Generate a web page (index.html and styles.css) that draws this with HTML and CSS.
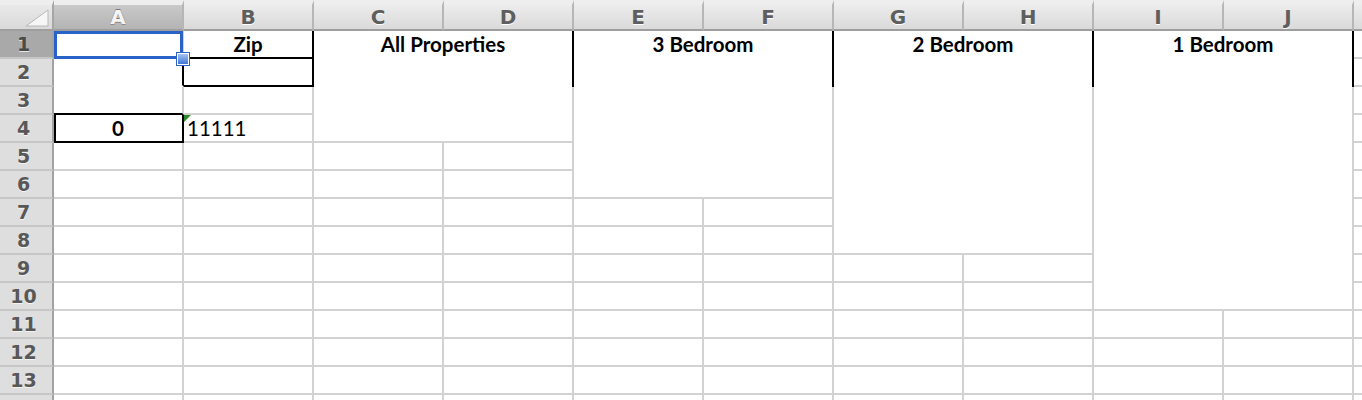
FILE: index.html
```html
<!DOCTYPE html>
<html>
<head>
<meta charset="utf-8">
<link rel="stylesheet" href="styles.css">
</head>
<body>
<div class="sheet">
  <div class="corner"><svg class="corner-tri" width="24" height="18" viewBox="0 0 24 18"><path d="M1 17 L23 1 L23 17 Z" fill="#f6f6f6" stroke="#b8b8b8" stroke-width="1"/></svg></div>
  <div class="ch ch-sel">A</div><div class="ch">B</div><div class="ch">C</div><div class="ch">D</div><div class="ch">E</div><div class="ch">F</div><div class="ch">G</div><div class="ch">H</div><div class="ch">I</div><div class="ch">J</div><div class="ch"></div>

  <div class="rh rh-sel">1</div>
  <div class="c sel"><span class="handle"></span></div>
  <div class="c t bk-r bk-b">Zip</div>
  <div class="c t m-cd">All Properties</div>
  <div class="c t m-ef bk-seg">3 Bedroom</div>
  <div class="c t m-gh bk-seg">2 Bedroom</div>
  <div class="c t m-ij bk-seg bk-seg-r">1 Bedroom</div>
  <div class="c"></div>

  <div class="rh">2</div>
  <div class="c bk-r no-b"></div>
  <div class="c bk-r bk-b"></div>
  <div class="c"></div>

  <div class="rh">3</div>
  <div class="c bk-b"></div>
  <div class="c"></div>
  <div class="c"></div>

  <div class="rh">4</div>
  <div class="c t bk-r bk-b bk-l">0</div>
  <div class="c num-text">11111</div>
  <div class="c"></div>

  <div class="rh">5</div>
  <div class="c"></div><div class="c"></div><div class="c"></div><div class="c"></div>
  <div class="c"></div>

  <div class="rh">6</div>
  <div class="c"></div><div class="c"></div><div class="c"></div><div class="c"></div>
  <div class="c"></div>

  <div class="rh">7</div>
  <div class="c"></div><div class="c"></div><div class="c"></div><div class="c"></div><div class="c"></div><div class="c"></div>
  <div class="c"></div>

  <div class="rh">8</div>
  <div class="c"></div><div class="c"></div><div class="c"></div><div class="c"></div><div class="c"></div><div class="c"></div>
  <div class="c"></div>

  <div class="rh">9</div>
  <div class="c"></div><div class="c"></div><div class="c"></div><div class="c"></div><div class="c"></div><div class="c"></div><div class="c"></div><div class="c"></div>
  <div class="c"></div>

  <div class="rh">10</div>
  <div class="c"></div><div class="c"></div><div class="c"></div><div class="c"></div><div class="c"></div><div class="c"></div><div class="c"></div><div class="c"></div>
  <div class="c"></div>

  <div class="rh">11</div>
  <div class="c"></div><div class="c"></div><div class="c"></div><div class="c"></div><div class="c"></div><div class="c"></div><div class="c"></div><div class="c"></div><div class="c"></div><div class="c"></div>
  <div class="c"></div>

  <div class="rh">12</div>
  <div class="c"></div><div class="c"></div><div class="c"></div><div class="c"></div><div class="c"></div><div class="c"></div><div class="c"></div><div class="c"></div><div class="c"></div><div class="c"></div>
  <div class="c"></div>

  <div class="rh">13</div>
  <div class="c"></div><div class="c"></div><div class="c"></div><div class="c"></div><div class="c"></div><div class="c"></div><div class="c"></div><div class="c"></div><div class="c"></div><div class="c"></div>
  <div class="c"></div>

  <div class="rh">14</div>
  <div class="c"></div><div class="c"></div><div class="c"></div><div class="c"></div><div class="c"></div><div class="c"></div><div class="c"></div><div class="c"></div><div class="c"></div><div class="c"></div>
  <div class="c"></div>
</div>
</body>
</html>
```

FILE: styles.css
```css
html, body {
  margin: 0;
  padding: 0;
  background: #ffffff;
  overflow: hidden;
}

.sheet {
  display: grid;
  grid-template-columns: 54px repeat(11, 130px);
  grid-template-rows: 31px repeat(14, 28px);
  width: 1484px;
}

.corner {
  box-sizing: border-box;
  border-top: 5px solid #eeeeee;
  border-right: 2px solid #a6a6a6;
  border-bottom: 2px solid #9e9e9e;
  background: linear-gradient(#e9e9e9, #d9d9d9);
  display: flex;
  justify-content: flex-end;
  align-items: flex-end;
  padding: 0 3px 2px 0;
}

.corner-tri {
  display: block;
}

.ch {
  box-sizing: border-box;
  border-top: 5px solid #eeeeee;
  border-right: 2px solid #b6b6b6;
  border-bottom: 2px solid #9e9e9e;
  background: linear-gradient(#ececec, #dadada);
  font-family: "DejaVu Sans", sans-serif;
  font-weight: bold;
  font-size: 20px;
  line-height: 24px;
  color: #5e5e5e;
  text-align: center;
  text-shadow: 0 1px 0 #ffffff;
}

.ch-sel {
  background: linear-gradient(#c9c9c9, #b4b4b4);
  color: #f4f4f4;
  text-shadow: 0 -1px 0 #7a7a7a, 0 1px 0 #8a8a8a;
}

.rh {
  box-sizing: border-box;
  border-right: 2px solid #a2a2a2;
  border-bottom: 2px solid #c6c6c6;
  background: #dedede;
  font-family: "DejaVu Sans", sans-serif;
  font-weight: bold;
  font-size: 19px;
  line-height: 26px;
  color: #585858;
  text-align: center;
  padding-right: 5px;
  text-shadow: 0 1px 0 #f4f4f4;
}

.rh-sel {
  background: #a9a9a9;
  color: #4a4a4a;
  text-shadow: 0 1px 0 #e6e6e6;
}

.c {
  box-sizing: border-box;
  border-right: 2px solid #d2d2d2;
  border-bottom: 2px solid #d2d2d2;
  position: relative;
  font-family: "Lato", sans-serif;
  font-size: 20.5px;
  line-height: 26px;
  color: #000000;
}

.t {
  font-weight: bold;
  text-align: center;
}

.bk-r { border-right-color: #000000; }
.bk-b { border-bottom-color: #000000; }
.bk-l { box-shadow: inset 2px 0 0 #000000; }
.no-b { border-bottom-color: #ffffff; }

.m-cd { grid-column: span 2; grid-row: span 4; }
.m-ef { grid-column: span 2; grid-row: span 6; }
.m-gh { grid-column: span 2; grid-row: span 8; }
.m-ij { grid-column: span 2; grid-row: span 10; }

.bk-seg::before {
  content: "";
  position: absolute;
  left: -2px;
  top: 0;
  width: 2px;
  height: 56px;
  background: #000000;
}

.bk-seg-r::after {
  content: "";
  position: absolute;
  right: -2px;
  top: 0;
  width: 2px;
  height: 56px;
  background: #000000;
}

.sel::after {
  content: "";
  position: absolute;
  left: 0;
  top: 0;
  right: -1px;
  bottom: -2px;
  border: 3px solid #2a63c8;
  z-index: 2;
}

.handle {
  position: absolute;
  right: -7px;
  bottom: -8px;
  width: 10px;
  height: 10px;
  border: 1px solid #ffffff;
  background: linear-gradient(#a6c4f2, #3f76d6);
  box-shadow: 0 0 0 1px #2a63c8;
  z-index: 3;
}

.num-text {
  padding-left: 3px;
  text-align: left;
}

.num-text::before {
  content: "";
  position: absolute;
  left: 0;
  top: 0;
  width: 0;
  height: 0;
  border-top: 7px solid #2a8a2a;
  border-right: 7px solid transparent;
}
```
